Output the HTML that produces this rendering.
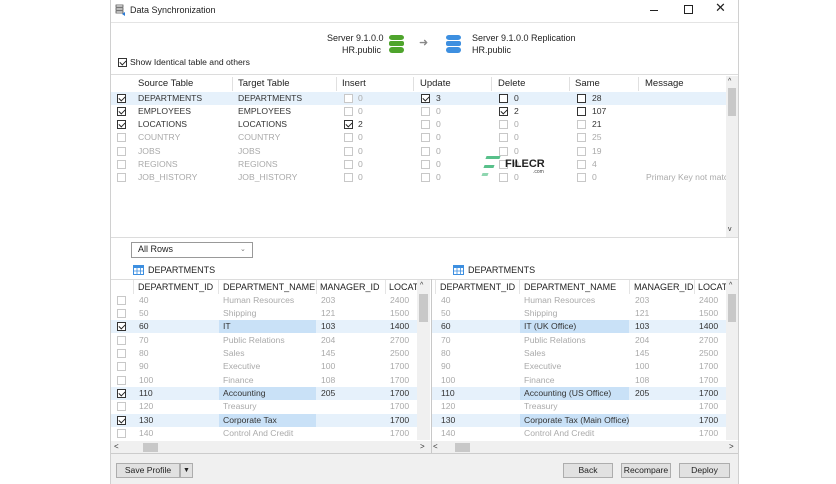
<!DOCTYPE html>
<html><head><meta charset="utf-8">
<style>
*{margin:0;padding:0;box-sizing:border-box}
body{width:836px;height:484px;background:#fff;position:relative;overflow:hidden;font-family:"Liberation Sans",sans-serif;font-size:9px;color:#222}
.a{position:absolute}
.t{position:absolute;white-space:nowrap;line-height:13px;font-size:8.6px;color:#333}
.g{color:#aaa}
.h{position:absolute;white-space:nowrap;font-size:9.5px;color:#222;line-height:14px}
.cb{position:absolute;width:9px;height:9px;border:1px solid #c8c8c8;background:#fff}
.cb.d{border-color:#333}
.cb.c{border-color:#333}
.cb.c::after{content:'';position:absolute;left:2px;top:0px;width:3px;height:5px;border:solid #222;border-width:0 1.2px 1.2px 0;transform:rotate(45deg)}
.vs{position:absolute;background:#d8d8d8}
.sel{position:absolute;background:#e6f1fb}
.selc{position:absolute;background:#c9e1f7}
.btn{position:absolute;height:15px;border:1px solid #adadad;background:#e1e1e1;font-size:8.6px;line-height:13px;text-align:center;color:#222}
</style></head><body>
<div class="a" style="left:110px;top:0;width:629px;height:484px;border-left:1px solid #d0d0d0;border-right:1px solid #d0d0d0"></div>
<svg class="a" style="left:115px;top:4px" width="12" height="12" viewBox="0 0 12 12"><rect x="1" y="1" width="7" height="2" fill="none" stroke="#555" stroke-width=".8"/><rect x="1" y="4" width="7" height="2" fill="none" stroke="#555" stroke-width=".8"/><rect x="1" y="7" width="7" height="2" fill="none" stroke="#555" stroke-width=".8"/><path d="M7 10l3-2v4z" fill="#2a7ad5"/></svg>
<div class="h" style="left:130px;top:3px;font-size:9px">Data Synchronization</div>
<div class="a" style="left:650px;top:10px;width:8px;height:1px;background:#222"></div>
<div class="a" style="left:684px;top:5px;width:9px;height:9px;border:1px solid #222"></div>
<div class="h" style="left:715px;top:1px;font-size:13px;font-weight:normal">✕</div>
<div class="a" style="left:111px;top:22px;width:627px;height:1px;background:#e4e4e4"></div>
<div class="t" style="left:327px;top:32px;color:#222;font-size:9px;line-height:12px;text-align:right;width:54px">Server 9.1.0.0<br>HR.public</div>
<svg class="a" style="left:389px;top:35px" width="15" height="18" viewBox="0 0 15 18"><g fill="#4ea42c"><rect x="0" y="0" width="15" height="5" rx="3"/><rect x="0" y="6" width="15" height="5" rx="2"/><rect x="0" y="12" width="15" height="6" rx="3"/></g></svg>
<div class="h" style="left:419px;top:36px;color:#888;font-size:11px">➜</div>
<svg class="a" style="left:446px;top:35px" width="15" height="18" viewBox="0 0 15 18"><g fill="#3d8fe0"><rect x="0" y="0" width="15" height="5" rx="3"/><rect x="0" y="6" width="15" height="5" rx="2"/><rect x="0" y="12" width="15" height="6" rx="3"/></g></svg>
<div class="t" style="left:472px;top:32px;color:#222;font-size:9px;line-height:12px">Server 9.1.0.0 Replication<br>HR.public</div>
<div class="cb c" style="left:118px;top:58px"></div>
<div class="t" style="left:130px;top:56px;color:#222">Show Identical table and others</div>
<div class="a" style="left:111px;top:74px;width:627px;height:1px;background:#dcdcdc"></div>
<div class="h" style="left:138px;top:77px">Source Table</div>
<div class="h" style="left:238px;top:77px">Target Table</div>
<div class="h" style="left:342px;top:77px">Insert</div>
<div class="h" style="left:420px;top:77px">Update</div>
<div class="h" style="left:498px;top:77px">Delete</div>
<div class="h" style="left:575px;top:77px">Same</div>
<div class="h" style="left:645px;top:77px">Message</div>
<div class="a" style="left:232px;top:77px;width:1px;height:14px;background:#e0e0e0"></div>
<div class="a" style="left:336px;top:77px;width:1px;height:14px;background:#e0e0e0"></div>
<div class="a" style="left:413px;top:77px;width:1px;height:14px;background:#e0e0e0"></div>
<div class="a" style="left:491px;top:77px;width:1px;height:14px;background:#e0e0e0"></div>
<div class="a" style="left:569px;top:77px;width:1px;height:14px;background:#e0e0e0"></div>
<div class="a" style="left:638px;top:77px;width:1px;height:14px;background:#e0e0e0"></div>
<div class="sel" style="left:111px;top:92px;width:615px;height:13px"></div>
<div class="a" style="left:726px;top:76px;width:12px;height:161px;background:#f0f0f0"></div>
<div class="vs" style="left:728px;top:88px;width:8px;height:28px;background:#c8c8c8"></div>
<div class="t" style="left:728px;top:75px;font-size:7px">^</div>
<div class="t" style="left:728px;top:223px;font-size:7px">v</div>
<div class="cb c" style="left:117px;top:94px"></div><div class="t" style="left:138px;top:92px">DEPARTMENTS</div><div class="t" style="left:238px;top:92px">DEPARTMENTS</div>
<div class="cb" style="left:344px;top:94px"></div><div class="t g" style="left:358px;top:92px">0</div>
<div class="cb c" style="left:421px;top:94px"></div><div class="t" style="left:436px;top:92px">3</div>
<div class="cb d" style="left:499px;top:94px"></div><div class="t" style="left:514px;top:92px">0</div>
<div class="cb d" style="left:577px;top:94px"></div><div class="t" style="left:592px;top:92px">28</div>
<div class="cb c" style="left:117px;top:107px"></div><div class="t" style="left:138px;top:105px">EMPLOYEES</div><div class="t" style="left:238px;top:105px">EMPLOYEES</div>
<div class="cb" style="left:344px;top:107px"></div><div class="t g" style="left:358px;top:105px">0</div>
<div class="cb" style="left:421px;top:107px"></div><div class="t g" style="left:436px;top:105px">0</div>
<div class="cb c" style="left:499px;top:107px"></div><div class="t" style="left:514px;top:105px">2</div>
<div class="cb d" style="left:577px;top:107px"></div><div class="t" style="left:592px;top:105px">107</div>
<div class="cb c" style="left:117px;top:120px"></div><div class="t" style="left:138px;top:118px">LOCATIONS</div><div class="t" style="left:238px;top:118px">LOCATIONS</div>
<div class="cb c" style="left:344px;top:120px"></div><div class="t" style="left:358px;top:118px">2</div>
<div class="cb" style="left:421px;top:120px"></div><div class="t g" style="left:436px;top:118px">0</div>
<div class="cb" style="left:499px;top:120px"></div><div class="t g" style="left:514px;top:118px">0</div>
<div class="cb" style="left:577px;top:120px"></div><div class="t" style="left:592px;top:118px">21</div>
<div class="cb" style="left:117px;top:133px"></div><div class="t g" style="left:138px;top:131px">COUNTRY</div><div class="t g" style="left:238px;top:131px">COUNTRY</div>
<div class="cb" style="left:344px;top:133px"></div><div class="t g" style="left:358px;top:131px">0</div><div class="cb" style="left:421px;top:133px"></div><div class="t g" style="left:436px;top:131px">0</div><div class="cb" style="left:499px;top:133px"></div><div class="t g" style="left:514px;top:131px">0</div><div class="cb" style="left:577px;top:133px"></div><div class="t g" style="left:592px;top:131px">25</div>
<div class="cb" style="left:117px;top:147px"></div><div class="t g" style="left:138px;top:145px">JOBS</div><div class="t g" style="left:238px;top:145px">JOBS</div>
<div class="cb" style="left:344px;top:147px"></div><div class="t g" style="left:358px;top:145px">0</div><div class="cb" style="left:421px;top:147px"></div><div class="t g" style="left:436px;top:145px">0</div><div class="cb" style="left:499px;top:147px"></div><div class="t g" style="left:514px;top:145px">0</div><div class="cb" style="left:577px;top:147px"></div><div class="t g" style="left:592px;top:145px">19</div>
<div class="cb" style="left:117px;top:160px"></div><div class="t g" style="left:138px;top:158px">REGIONS</div><div class="t g" style="left:238px;top:158px">REGIONS</div>
<div class="cb" style="left:344px;top:160px"></div><div class="t g" style="left:358px;top:158px">0</div><div class="cb" style="left:421px;top:160px"></div><div class="t g" style="left:436px;top:158px">0</div><div class="cb" style="left:499px;top:160px"></div><div class="t g" style="left:514px;top:158px">0</div><div class="cb" style="left:577px;top:160px"></div><div class="t g" style="left:592px;top:158px">4</div>
<div class="cb" style="left:117px;top:173px"></div><div class="t g" style="left:138px;top:171px">JOB_HISTORY</div><div class="t g" style="left:238px;top:171px">JOB_HISTORY</div>
<div class="cb" style="left:344px;top:173px"></div><div class="t g" style="left:358px;top:171px">0</div><div class="cb" style="left:421px;top:173px"></div><div class="t g" style="left:436px;top:171px">0</div><div class="cb" style="left:499px;top:173px"></div><div class="t g" style="left:514px;top:171px">0</div><div class="cb" style="left:577px;top:173px"></div><div class="t g" style="left:592px;top:171px">0</div>
<div class="t g" style="left:646px;top:171px;width:80px;overflow:hidden">Primary Key not match</div>
<div class="a" style="left:486px;top:156px;width:14px;height:3px;background:#58c08a;transform:skewX(-20deg)"></div>
<div class="a" style="left:484px;top:165px;width:10px;height:3px;background:#58c08a;transform:skewX(-20deg)"></div>
<div class="a" style="left:482px;top:173px;width:6px;height:3px;background:#8fd6b0;transform:skewX(-20deg)"></div>
<div class="t" style="left:505px;top:158px;font-weight:bold;font-size:11px;color:#222">FILECR</div>
<div class="t" style="left:533px;top:166px;font-size:5px;color:#444">.com</div>
<div class="a" style="left:111px;top:237px;width:627px;height:1px;background:#dcdcdc"></div>
<div class="a" style="left:131px;top:242px;width:122px;height:16px;border:1px solid #999;background:#fff"></div>
<div class="t" style="left:138px;top:243px;color:#222;font-size:9px">All Rows</div>
<div class="t" style="left:240px;top:243px;color:#777;font-size:7px">⌄</div>
<svg class="a" style="left:133px;top:265px" width="11" height="10" viewBox="0 0 11 10"><rect x=".5" y=".5" width="10" height="9" fill="#fff" stroke="#3d8fe0"/><rect x="0" y="0" width="11" height="3" fill="#3d8fe0"/><path d="M0 6h11M4 3v7M7.5 3v7" stroke="#3d8fe0" stroke-width=".8"/></svg>
<div class="t" style="left:148px;top:264px;color:#222;font-size:9px">DEPARTMENTS</div>
<svg class="a" style="left:453px;top:265px" width="11" height="10" viewBox="0 0 11 10"><rect x=".5" y=".5" width="10" height="9" fill="#fff" stroke="#3d8fe0"/><rect x="0" y="0" width="11" height="3" fill="#3d8fe0"/><path d="M0 6h11M4 3v7M7.5 3v7" stroke="#3d8fe0" stroke-width=".8"/></svg>
<div class="t" style="left:468px;top:264px;color:#222;font-size:9px">DEPARTMENTS</div>
<div class="a" style="left:111px;top:279px;width:627px;height:1px;background:#dcdcdc"></div>
<div class="a" style="left:431px;top:279px;width:1px;height:175px;background:#c8c8c8"></div>
<div class="h" style="left:138px;top:280px;font-size:9px">DEPARTMENT_ID</div>
<div class="h" style="left:223px;top:280px;font-size:9px">DEPARTMENT_NAME</div>
<div class="h" style="left:320px;top:280px;font-size:9px">MANAGER_ID</div>
<div class="h" style="left:389px;top:280px;font-size:9px;width:28px;overflow:hidden">LOCATION</div>
<div class="a" style="left:133px;top:280px;width:1px;height:14px;background:#e4e4e4"></div>
<div class="a" style="left:218px;top:280px;width:1px;height:14px;background:#e4e4e4"></div>
<div class="a" style="left:316px;top:280px;width:1px;height:14px;background:#e4e4e4"></div>
<div class="a" style="left:385px;top:280px;width:1px;height:14px;background:#e4e4e4"></div>
<div class="a" style="left:417px;top:280px;width:13px;height:160px;background:#f0f0f0"></div>
<div class="vs" style="left:419px;top:294px;width:9px;height:28px;background:#c8c8c8"></div>
<div class="t" style="left:420px;top:279px;font-size:7px">^</div>
<div class="h" style="left:440px;top:280px;font-size:9px">DEPARTMENT_ID</div>
<div class="h" style="left:524px;top:280px;font-size:9px">DEPARTMENT_NAME</div>
<div class="h" style="left:634px;top:280px;font-size:9px">MANAGER_ID</div>
<div class="h" style="left:698px;top:280px;font-size:9px;width:28px;overflow:hidden">LOCATION</div>
<div class="a" style="left:435px;top:280px;width:1px;height:14px;background:#e4e4e4"></div>
<div class="a" style="left:519px;top:280px;width:1px;height:14px;background:#e4e4e4"></div>
<div class="a" style="left:629px;top:280px;width:1px;height:14px;background:#e4e4e4"></div>
<div class="a" style="left:694px;top:280px;width:1px;height:14px;background:#e4e4e4"></div>
<div class="a" style="left:726px;top:280px;width:12px;height:160px;background:#f0f0f0"></div>
<div class="vs" style="left:728px;top:294px;width:8px;height:28px;background:#c8c8c8"></div>
<div class="t" style="left:729px;top:279px;font-size:7px">^</div>
<div class="sel" style="left:111px;top:320px;width:306px;height:13px"></div><div class="selc" style="left:219px;top:320px;width:97px;height:13px"></div>
<div class="sel" style="left:111px;top:387px;width:306px;height:13px"></div><div class="selc" style="left:219px;top:387px;width:97px;height:13px"></div>
<div class="sel" style="left:111px;top:414px;width:306px;height:13px"></div><div class="selc" style="left:219px;top:414px;width:97px;height:13px"></div>
<div class="sel" style="left:432px;top:320px;width:294px;height:13px"></div><div class="selc" style="left:520px;top:320px;width:109px;height:13px"></div>
<div class="sel" style="left:432px;top:387px;width:294px;height:13px"></div><div class="selc" style="left:520px;top:387px;width:109px;height:13px"></div>
<div class="sel" style="left:432px;top:414px;width:294px;height:13px"></div><div class="selc" style="left:520px;top:414px;width:109px;height:13px"></div>
<div class="cb" style="left:117px;top:296px"></div><div class="t g" style="left:139px;top:294px">40</div><div class="t g" style="left:223px;top:294px">Human Resources</div><div class="t g" style="left:321px;top:294px">203</div><div class="t g" style="left:390px;top:294px">2400</div>
<div class="cb" style="left:117px;top:309px"></div><div class="t g" style="left:139px;top:307px">50</div><div class="t g" style="left:223px;top:307px">Shipping</div><div class="t g" style="left:321px;top:307px">121</div><div class="t g" style="left:390px;top:307px">1500</div>
<div class="cb c" style="left:117px;top:322px"></div><div class="t" style="left:139px;top:320px">60</div><div class="t" style="left:223px;top:320px">IT</div><div class="t" style="left:321px;top:320px">103</div><div class="t" style="left:390px;top:320px">1400</div>
<div class="cb" style="left:117px;top:336px"></div><div class="t g" style="left:139px;top:334px">70</div><div class="t g" style="left:223px;top:334px">Public Relations</div><div class="t g" style="left:321px;top:334px">204</div><div class="t g" style="left:390px;top:334px">2700</div>
<div class="cb" style="left:117px;top:349px"></div><div class="t g" style="left:139px;top:347px">80</div><div class="t g" style="left:223px;top:347px">Sales</div><div class="t g" style="left:321px;top:347px">145</div><div class="t g" style="left:390px;top:347px">2500</div>
<div class="cb" style="left:117px;top:362px"></div><div class="t g" style="left:139px;top:360px">90</div><div class="t g" style="left:223px;top:360px">Executive</div><div class="t g" style="left:321px;top:360px">100</div><div class="t g" style="left:390px;top:360px">1700</div>
<div class="cb" style="left:117px;top:376px"></div><div class="t g" style="left:139px;top:374px">100</div><div class="t g" style="left:223px;top:374px">Finance</div><div class="t g" style="left:321px;top:374px">108</div><div class="t g" style="left:390px;top:374px">1700</div>
<div class="cb c" style="left:117px;top:389px"></div><div class="t" style="left:139px;top:387px">110</div><div class="t" style="left:223px;top:387px">Accounting</div><div class="t" style="left:321px;top:387px">205</div><div class="t" style="left:390px;top:387px">1700</div>
<div class="cb" style="left:117px;top:402px"></div><div class="t g" style="left:139px;top:400px">120</div><div class="t g" style="left:223px;top:400px">Treasury</div><div class="t g" style="left:390px;top:400px">1700</div>
<div class="cb c" style="left:117px;top:416px"></div><div class="t" style="left:139px;top:414px">130</div><div class="t" style="left:223px;top:414px">Corporate Tax</div><div class="t" style="left:390px;top:414px">1700</div>
<div class="cb" style="left:117px;top:429px"></div><div class="t g" style="left:139px;top:427px">140</div><div class="t g" style="left:223px;top:427px">Control And Credit</div><div class="t g" style="left:390px;top:427px">1700</div>
<div class="t g" style="left:441px;top:294px">40</div><div class="t g" style="left:524px;top:294px">Human Resources</div><div class="t g" style="left:635px;top:294px">203</div><div class="t g" style="left:699px;top:294px">2400</div>
<div class="t g" style="left:441px;top:307px">50</div><div class="t g" style="left:524px;top:307px">Shipping</div><div class="t g" style="left:635px;top:307px">121</div><div class="t g" style="left:699px;top:307px">1500</div>
<div class="t" style="left:441px;top:320px">60</div><div class="t" style="left:524px;top:320px">IT (UK Office)</div><div class="t" style="left:635px;top:320px">103</div><div class="t" style="left:699px;top:320px">1400</div>
<div class="t g" style="left:441px;top:334px">70</div><div class="t g" style="left:524px;top:334px">Public Relations</div><div class="t g" style="left:635px;top:334px">204</div><div class="t g" style="left:699px;top:334px">2700</div>
<div class="t g" style="left:441px;top:347px">80</div><div class="t g" style="left:524px;top:347px">Sales</div><div class="t g" style="left:635px;top:347px">145</div><div class="t g" style="left:699px;top:347px">2500</div>
<div class="t g" style="left:441px;top:360px">90</div><div class="t g" style="left:524px;top:360px">Executive</div><div class="t g" style="left:635px;top:360px">100</div><div class="t g" style="left:699px;top:360px">1700</div>
<div class="t g" style="left:441px;top:374px">100</div><div class="t g" style="left:524px;top:374px">Finance</div><div class="t g" style="left:635px;top:374px">108</div><div class="t g" style="left:699px;top:374px">1700</div>
<div class="t" style="left:441px;top:387px">110</div><div class="t" style="left:524px;top:387px">Accounting (US Office)</div><div class="t" style="left:635px;top:387px">205</div><div class="t" style="left:699px;top:387px">1700</div>
<div class="t g" style="left:441px;top:400px">120</div><div class="t g" style="left:524px;top:400px">Treasury</div><div class="t g" style="left:699px;top:400px">1700</div>
<div class="t" style="left:441px;top:414px">130</div><div class="t" style="left:524px;top:414px">Corporate Tax (Main Office)</div><div class="t" style="left:699px;top:414px">1700</div>
<div class="t g" style="left:441px;top:427px">140</div><div class="t g" style="left:524px;top:427px">Control And Credit</div><div class="t g" style="left:699px;top:427px">1700</div>
<div class="a" style="left:111px;top:441px;width:320px;height:12px;background:#f0f0f0"></div>
<div class="a" style="left:432px;top:441px;width:306px;height:12px;background:#f0f0f0"></div>
<div class="vs" style="left:143px;top:443px;width:15px;height:9px;background:#c8c8c8"></div>
<div class="vs" style="left:455px;top:443px;width:15px;height:9px;background:#c8c8c8"></div>
<div class="t" style="left:114px;top:440px;font-size:8px">&lt;</div>
<div class="t" style="left:420px;top:440px;font-size:8px">&gt;</div>
<div class="t" style="left:433px;top:440px;font-size:8px">&lt;</div>
<div class="t" style="left:729px;top:440px;font-size:8px">&gt;</div>
<div class="a" style="left:111px;top:453px;width:627px;height:31px;background:#f0f0f0;border-top:1px solid #ccc"></div>
<div class="btn" style="left:116px;top:463px;width:64px">Save Profile</div>
<div class="btn" style="left:180px;top:463px;width:13px;font-size:7px">▼</div>
<div class="btn" style="left:563px;top:463px;width:50px">Back</div>
<div class="btn" style="left:621px;top:463px;width:50px">Recompare</div>
<div class="btn" style="left:679px;top:463px;width:51px">Deploy</div>
</body></html>
